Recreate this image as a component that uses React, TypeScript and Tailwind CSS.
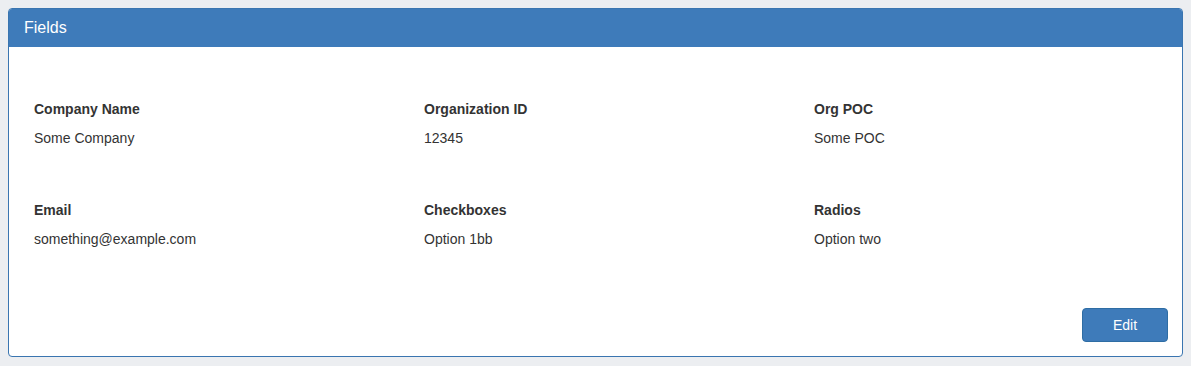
const fields = [
  { label: "Company Name", value: "Some Company" },
  { label: "Organization ID", value: "12345" },
  { label: "Org POC", value: "Some POC" },
  { label: "Email", value: "something@example.com" },
  { label: "Checkboxes", value: "Option 1bb" },
  { label: "Radios", value: "Option two" },
];

export default function App() {
  return (
    <div className="min-h-[366px] bg-[#eceef1] p-2 font-['Liberation_Sans',Arial,sans-serif] text-[14px] text-[#333]">
      <div className="overflow-hidden rounded-[4px] border border-[#3a75b0] bg-white">
        {/* header */}
        <div className="h-[38px] bg-[#3e7bba] px-[15px] pt-[10px] text-[16px] leading-[18px] text-white">
          Fields
        </div>

        <div className="px-[25px] pt-[52px]">
          <div className="grid grid-cols-[390px_390px_1fr] gap-y-[52px]">
            {fields.map((f) => (
              <div key={f.label}>
                <div className="font-bold leading-[20px]">{f.label}</div>
                <div className="mt-[9px] leading-[20px]">{f.value}</div>
              </div>
            ))}
          </div>
        </div>

        <div className="flex justify-end px-[14px] pb-[14px] pt-[59px]">
          <button className="h-[34px] w-[86px] rounded-[4px] border border-[#2e6da4] bg-[#3e7bba] text-[14px] text-white">
            Edit
          </button>
        </div>
      </div>
    </div>
  );
}
